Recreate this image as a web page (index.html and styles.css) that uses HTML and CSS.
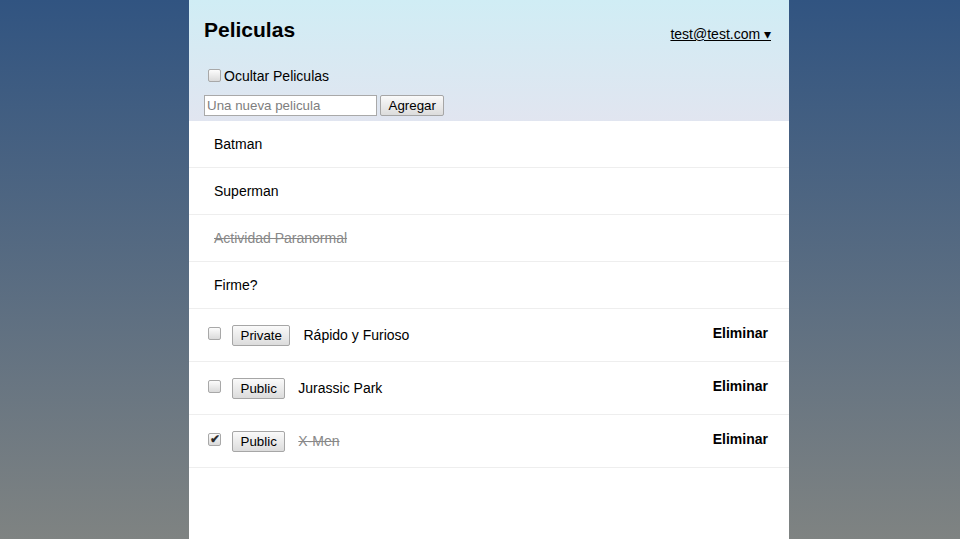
FILE: index.html
```html
<!DOCTYPE html>
<html lang="es">
<head>
<meta charset="utf-8">
<title>Peliculas</title>
<link rel="stylesheet" href="styles.css">
</head>
<body>
<div class="container">
  <header class="header">
    <div class="top-row">
      <h1 class="title">Peliculas</h1>
      <a class="login-link" href="#">test@test.com ▾</a>
    </div>
    <label class="hide-completed"><input type="checkbox" class="cb">Ocultar Peliculas</label>
    <form class="new-task">
      <input type="text" class="new-input" placeholder="Una nueva pelicula"> <button type="button" class="btn">Agregar</button>
    </form>
  </header>
  <ul class="list">
    <li class="item"><span class="text">Batman</span></li>
    <li class="item"><span class="text">Superman</span></li>
    <li class="item checked"><span class="text">Actividad Paranormal</span></li>
    <li class="item"><span class="text">Firme?</span></li>
    <li class="item owned"><input type="checkbox" class="cb row-cb"><button type="button" class="btn toggle-private">Private</button><span class="text row-text">Rápido y Furioso</span><button type="button" class="delete">Eliminar</button></li>
    <li class="item owned"><input type="checkbox" class="cb row-cb"><button type="button" class="btn toggle-private">Public</button><span class="text row-text">Jurassic Park</span><button type="button" class="delete">Eliminar</button></li>
    <li class="item owned checked"><input type="checkbox" class="cb row-cb" checked><button type="button" class="btn toggle-private">Public</button><span class="text row-text">X-Men</span><button type="button" class="delete">Eliminar</button></li>
  </ul>
</div>
</body>
</html>
```

FILE: styles.css
```css
html, body {
  height: 100%;
}
body {
  margin: 0;
  padding: 0 0 0 18px;
  box-sizing: border-box;
  font-family: "Liberation Sans", Arial, sans-serif;
  font-size: 14px;
  color: #000;
  background-color: #315481;
  background-image: linear-gradient(to bottom, #315481 0, #918e82 665px);
  background-attachment: fixed;
}
.container {
  width: 600px;
  margin: 0 auto;
  min-height: 100%;
  background: #fff;
}
.header {
  padding: 18px 15px 5px 15px;
  background: #d2edf4;
  background-image: linear-gradient(to bottom, #d0edf5, #e1e5f0 100%);
}
.top-row {
  display: flex;
  justify-content: space-between;
  align-items: flex-start;
}
.title {
  font-size: 21px;
  font-weight: bold;
  margin: 0 0 10px 0;
  line-height: 24px;
}
.login-link {
  color: #000;
  text-decoration: underline;
  margin-top: 8px;
  margin-right: 3px;
  line-height: 16px;
}
.hide-completed {
  display: block;
  margin-top: 14px;
  line-height: 16px;
}
.hide-completed .cb {
  vertical-align: -4px;
}
.new-task {
  margin-top: 10px;
  display: flex;
  align-items: flex-start;
  gap: 3px;
}
.new-input {
  box-sizing: border-box;
  width: 173px;
  height: 21px;
  margin: 0;
  padding: 1px 2px;
  border: 1px solid #a9a9a9;
  font-family: "Liberation Sans", Arial, sans-serif;
  font-size: 13.33px;
  background: #fff;
}
.new-input::placeholder {
  color: #7e7e7e;
}
.btn {
  box-sizing: border-box;
  height: 21px;
  margin: 0;
  padding: 0 7.5px;
  font-family: "Liberation Sans", Arial, sans-serif;
  font-size: 13.33px;
  line-height: 16px;
  color: #000;
  border: 1px solid #a6a6a6;
  border-radius: 2px;
  background: linear-gradient(to bottom, #fafafa, #dcdcdc);
}
.cb {
  -webkit-appearance: none;
  appearance: none;
  box-sizing: border-box;
  position: relative;
  width: 13px;
  height: 13px;
  margin: 3px 3px 3px 4px;
  border: 1px solid #a8a8a8;
  border-radius: 2px;
  background: linear-gradient(to bottom, #fcfcfc, #dadada);
}
.cb:checked::after {
  content: "✔";
  position: absolute;
  left: 1px;
  top: -1px;
  font-size: 12px;
  font-weight: bold;
  line-height: 13px;
  color: #2a2a2a;
}
.list {
  margin: 0;
  padding: 0;
  list-style: none;
}
.item {
  padding: 15px;
  border-bottom: 1px solid #eee;
  line-height: 16px;
}
.text {
  margin-left: 10px;
}
.owned {
  display: flex;
  align-items: flex-start;
}
.row-cb {
  flex: none;
  margin: 3px 0 0 4px;
}
.toggle-private {
  margin: 1px 0 0 11px;
}
.row-text {
  margin: 3px 0 0 13px;
}
.checked {
  color: #888;
}
.checked .text {
  text-decoration: line-through;
}
.delete {
  margin-left: auto;
  font-family: "Liberation Sans", Arial, sans-serif;
  font-weight: bold;
  font-size: 14px;
  line-height: 16px;
  background: none;
  border: none;
  padding: 1px 6px;
  color: #000;
}
```
